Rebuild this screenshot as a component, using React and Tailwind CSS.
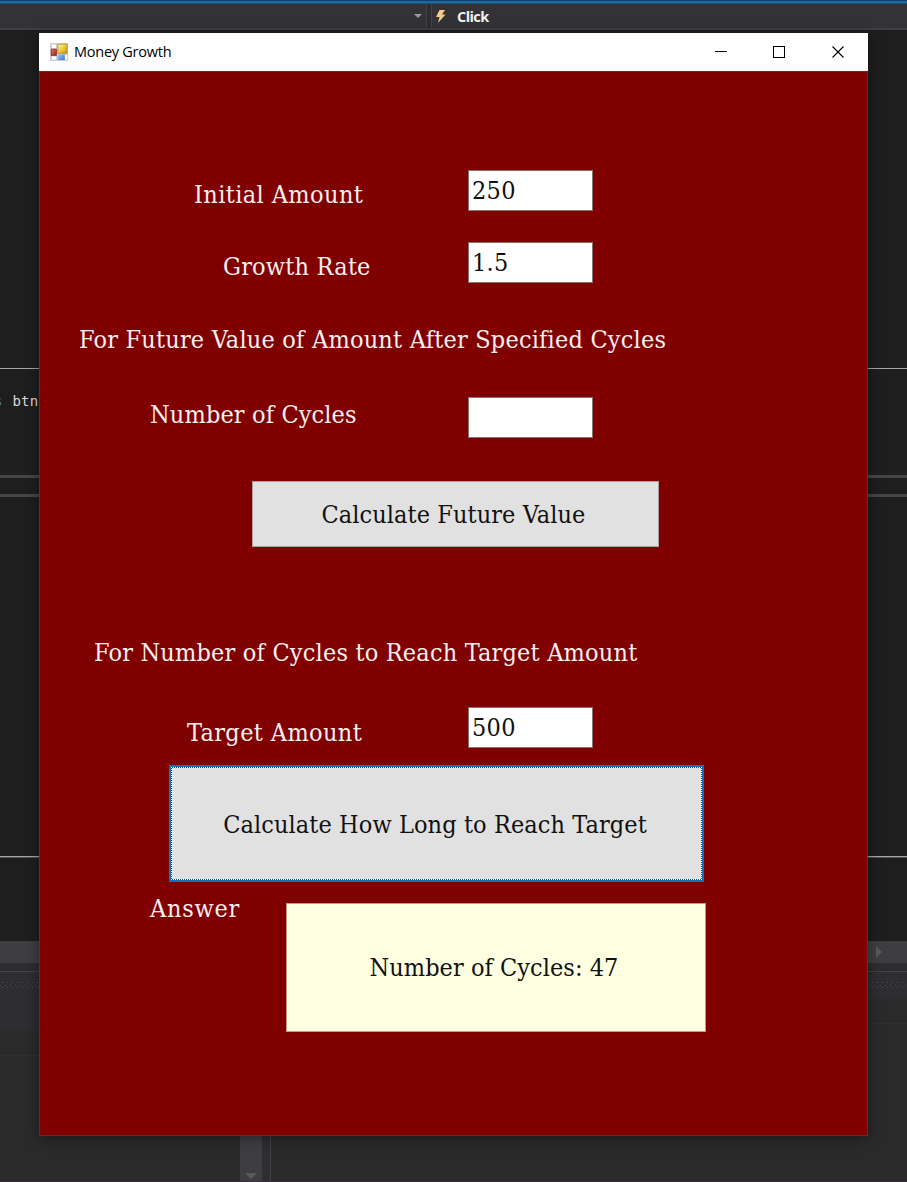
const serif = "font-['DejaVu_Serif_Condensed','DejaVu_Serif',serif] [font-stretch:condensed] text-[25px] leading-[30px] whitespace-nowrap";

function Field({ value, className = "" }) {
  return (
    <input
      readOnly
      value={value}
      className={`${serif} block h-[41px] w-[125px] shrink-0 border border-[#8a7472] bg-white pb-[1px] pl-[3px] tracking-[0.3px] text-[#111] outline-none ${className}`}
    />
  );
}

function Label({ children, className = "" }) {
  return <span className={`${serif} block shrink-0 text-[#f8eeee] ${className}`}>{children}</span>;
}

function FormsIcon() {
  return (
    <svg className="ml-[11px] h-[18px] w-[18px] shrink-0" viewBox="0 0 18 18">
      <defs>
        <linearGradient id="gold" x2="1" y2="1"><stop stopColor="#fff0a0" /><stop offset=".5" stopColor="#f3cc3c" /><stop offset="1" stopColor="#c99310" /></linearGradient>
        <linearGradient id="blue" x2="1" y2="1"><stop stopColor="#9cc6fa" /><stop offset="1" stopColor="#3a74d4" /></linearGradient>
        <linearGradient id="red" x2="1" y2="1"><stop stopColor="#e87a68" /><stop offset="1" stopColor="#a01f18" /></linearGradient>
      </defs>
      <rect width="18" height="18" rx=".5" fill="#cdced2" />
      <path d="M2 1.500h4v3.500h-4zM2 13.500h4v3h-4zM15 12h2v4.500h-2z" fill="#fff" />
      <rect x="7.500" y=".7" width="10" height="10" fill="#b58b2a" />
      <rect x="8.300" y="1.500" width="8.300" height="8.300" fill="url(#gold)" />
      <rect x=".8" y="5.800" width="6" height="7" fill="#8e2a22" />
      <rect x="1.500" y="6.500" width="4.500" height="5.500" fill="url(#red)" />
      <rect x="7.800" y="11.500" width="7" height="5.500" fill="url(#blue)" />
    </svg>
  );
}

function TitleBar() {
  return (
    <div className="flex h-[38px] items-center bg-white">
      <FormsIcon />
      <span className="ml-[6px] flex-1 font-['Open_Sans',sans-serif] text-[14.5px] leading-5 tracking-[-0.25px] text-black">Money Growth</span>
      <svg className="h-[38px] w-[160px] shrink-0" viewBox="0 0 160 38" fill="none" stroke="#000" shapeRendering="crispEdges">
        <path d="M7 18.500h12M65.500 13.500h11v11h-11z" />
        <path d="M124.500 13.500l11 11M135.500 13.500l-11 11" shapeRendering="auto" strokeWidth="1.100" />
      </svg>
    </div>
  );
}

function Grip() {
  return (
    <svg className="block h-[7px] w-full" shapeRendering="crispEdges">
      <defs>
        <pattern id="grip" width="5" height="5" patternUnits="userSpaceOnUse">
          <path d="M2 0h1v1h-1zM0 2.500h1v1h-1z" fill="#4c4c50" />
        </pattern>
      </defs>
      <rect width="100%" height="7" fill="url(#grip)" />
    </svg>
  );
}

function Editor() {
  return (
    <div className="flex h-[1182px] w-full flex-col overflow-hidden bg-[#1e1e1e]">
      <div className="h-[1px] shrink-0 bg-[#0d4068]" />
      <div className="h-[2px] shrink-0 bg-[#2169a0]" />
      <div className="h-[1px] shrink-0 bg-[#1c4d74]" />
      <div className="flex h-[26px] shrink-0 items-center border-b-2 border-[#3f3f44] bg-[#333337]">
        <div className="flex h-full w-[427px] items-center justify-end border-r border-[#434348] pr-1">
          <svg className="h-[4px] w-[8px]" viewBox="0 0 8 4"><path d="M0 0h8l-4 4z" fill="#9a9a9e" /></svg>
        </div>
        <div className="h-full w-[5px] border-r border-[#434348] bg-[#2d2d30]" />
        <svg className="ml-[3px] h-[15px] w-[12px]" viewBox="0 0 12 15"><path d="M4.500 1h5.500l-3 4.500h3.500l-7.500 8.500 1.500-6h-3.500z" fill="#f5c987" /></svg>
        <span className="mt-[2px] ml-[10px] font-['Open_Sans',sans-serif] text-[14.5px] leading-5 font-bold tracking-[-0.6px] text-[#f1f1f1]">Click</span>
      </div>
      <div className="h-[338px] shrink-0" />
      <div className="h-[1px] shrink-0 bg-[#a6a8a8]" />
      <div className="h-[106px] shrink-0 pt-[21px] font-['DejaVu_Sans_Mono',monospace] text-[14px] leading-[22px] whitespace-pre text-[#d8d8d8]">
        <span className="-ml-[6px] text-[#4b7f91]">s</span><span className="ml-[10px] tracking-[0.2px]">btn</span>
      </div>
      <div className="h-[3px] shrink-0 bg-[#464646]" />
      <div className="h-[16px] shrink-0" />
      <div className="h-[3px] shrink-0 bg-[#464646]" />
      <div className="h-[359px] shrink-0" />
      <div className="h-[2px] shrink-0 border-b border-[#505050] bg-[#a8a8a8]" />
      <div className="h-[83px] shrink-0" />
      <div className="flex h-[22px] shrink-0 items-center justify-end bg-[#3e3e42] pr-[25px]">
        <svg className="h-[12px] w-[6px]" viewBox="0 0 6 12"><path d="M0 0l6 6-6 6z" fill="#58585d" /></svg>
      </div>
      <div className="h-[8px] shrink-0 bg-[#2d2d30]" />
      <div className="h-[1px] shrink-0 bg-[#434347]" />
      <div className="h-[10px] shrink-0 bg-[#2d2d32]" />
      <div className="shrink-0 bg-[#2d2d32]"><Grip /></div>
      <div className="flex flex-1 border-b border-[#3a2b3d] bg-[#2a2a2b]">
        <div className="w-[240px]">
          <div className="h-[42px] bg-[#2d2d32]" />
          <div className="h-[25px] border-b border-[#303033]" />
        </div>
        <div className="flex w-[22px] items-end justify-center bg-[#3e3e42] pb-[2px]">
          <svg className="h-[6px] w-[12px]" viewBox="0 0 12 6"><path d="M0 0h12l-6 6z" fill="#58585d" /></svg>
        </div>
        <div className="w-[9px] border-r border-[#434347] bg-[#2d2d32]" />
        <div className="flex-1">
          <div className="h-[10px] bg-[#2d2d32]" />
          <div className="h-[25px] border-b border-[#303033]" />
        </div>
      </div>
    </div>
  );
}

export default function App() {
  return (
    <div className="relative h-[1182px] w-[907px] overflow-hidden">
      <Editor />
      <main className="absolute top-[33px] left-[39px] flex h-[1103px] w-[829px] flex-col bg-[#800000] shadow-[0_2px_14px_rgba(0,0,0,0.4)]">
        <TitleBar />
        <div className="flex flex-1 flex-col items-start border border-[#762324] pt-[98px]">
          <div className="flex h-[41px] pl-[154px]">
            <Label className="mt-[10px] w-[274px] tracking-[0.4px]">Initial Amount</Label>
            <Field value="250" />
          </div>
          <div className="mt-[31px] flex h-[41px] pl-[183px]">
            <Label className="mt-[10px] w-[245px] tracking-[0.2px]">Growth Rate</Label>
            <Field value="1.5" />
          </div>
          <Label className="mt-[42px] ml-[39px] tracking-[0.2px]">For Future Value of Amount After Specified Cycles</Label>
          <div className="mt-[42px] flex h-[41px] pl-[110px]">
            <Label className="mt-[3px] w-[318px] tracking-[0.13px]">Number of Cycles</Label>
            <Field value="" />
          </div>
          <button className={`${serif} mt-[43px] ml-[212px] h-[66px] w-[407px] border border-[#a9a0a0] bg-[#e1e1e1] pt-[2px] pr-[4px] tracking-[0.08px] text-[#111]`}>
            Calculate Future Value
          </button>
          <Label className="mt-[91px] ml-[54px] tracking-[0.19px]">For Number of Cycles to Reach Target Amount</Label>
          <div className="mt-[39px] flex h-[41px] pl-[147px]">
            <Label className="mt-[11px] w-[281px] tracking-[0.38px]">Target Amount</Label>
            <Field value="500" />
          </div>
          <button className="mt-[17px] ml-[129px] h-[117px] w-[535px] border-2 border-[#1173bd] bg-[#1173bd]">
            <span className="block h-full w-full bg-[repeating-conic-gradient(#17506e_0_25%,#f4fff4_0_50%)] bg-size-[2px_2px] p-[1px]">
              <span className={`${serif} flex h-full w-full items-center justify-center bg-[#e1e1e1] pt-[2px] pr-[3px] tracking-[0.09px] text-[#111]`}>
                Calculate How Long to Reach Target
              </span>
            </span>
          </button>
          <div className="mt-[11px] flex pl-[110px]">
            <Label className="mt-[1px] w-[136px] tracking-[0.75px]">Answer</Label>
            <output className={`${serif} mt-[10px] flex h-[129px] w-[420px] items-center justify-center border border-[#c49a86] bg-[#ffffe1] pt-[1px] pr-[4px] tracking-[0.05px] text-[#111]`}>
              Number of Cycles: 47
            </output>
          </div>
        </div>
      </main>
    </div>
  );
}
